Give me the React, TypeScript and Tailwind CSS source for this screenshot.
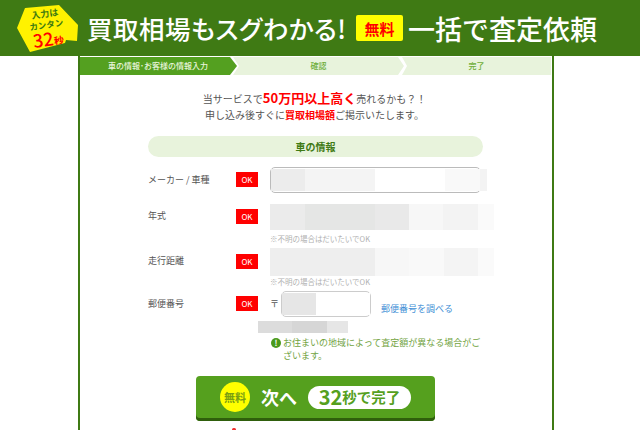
const font = { fontFamily: '"Noto Sans CJK JP", "Liberation Sans", sans-serif' };

function Blocks({ items }: { items: [number, string][] }) {
  return (
    <div className="flex h-full">
      {items.map(([w, c], i) => (
        <div key={i} className="h-full shrink-0" style={{ width: w, backgroundColor: c }} />
      ))}
    </div>
  );
}

function OkBadge() {
  return (
    <div className="-mt-[1px] flex h-[15px] w-[22px] shrink-0 items-center justify-center bg-[#ff0000] text-[8px] leading-none text-white">
      OK
    </div>
  );
}

function Badge() {
  return (
    <div className="ml-[17px] mt-[1px] flex h-[47px] w-[61px] shrink-0 flex-col items-center bg-[#fff200] pt-[5px] text-[#3c7a12] [clip-path:polygon(8px_3px,42px_0,61px_20px,60px_36px,49px_35px,48px_38px,13px_47px,0_23px)]">
      <div className="flex -translate-y-[1px] -rotate-[8deg] flex-col items-center">
        <span className="text-[9px] font-bold leading-[10px]">入力は</span>
        <span className="text-[8.5px] font-bold leading-[10px]">カンタン</span>
        <span className="text-[18px] font-medium leading-[18px] text-[#ff0000]">
          32<span className="text-[10px] font-bold">秒</span>
        </span>
      </div>
    </div>
  );
}

function Steps() {
  return (
    <div className="flex h-[18px] text-[8px] font-medium">
      <div className="flex w-[157px] shrink-0 items-center justify-center pr-[3px] pl-[2px] bg-[#54a020] text-[#e9f5dc] [clip-path:polygon(0_0,150px_0,157px_50%,150px_100%,0_100%)]">
        車の情報･お客様の情報入力
      </div>
      <div className="-ml-[4px] flex w-[171px] shrink-0 items-center justify-center bg-[#e8f3dc] text-[#6fae3a] [clip-path:polygon(0_0,165px_0,171px_50%,165px_100%,0_100%,6px_50%)]">
        確認
      </div>
      <div className="-ml-[2px] flex w-[149px] shrink-0 items-center justify-center bg-[#e8f3dc] text-[#6fae3a] [clip-path:polygon(0_0,100%_0,100%_100%,0_100%,5px_50%)]">
        完了
      </div>
    </div>
  );
}

function Hint() {
  return <p className="pl-[190px] text-[7.5px] leading-[12px] text-[#b0b0b0]">※不明の場合はだいたいでOK</p>;
}

export default function App() {
  return (
    <div className="h-[430px] w-[640px] overflow-hidden bg-white text-[9px] text-[#555]" style={font}>
      <header className="flex h-[56px] items-center bg-[#3f7a14] text-white">
        <Badge />
        <h1 className="ml-[9px] flex items-center text-[25.5px] font-medium leading-none">
          <span className="w-[269px] shrink-0 tracking-[0.5px] [font-feature-settings:'palt']">買取相場もスグわかる!</span>
          <span className="flex h-[26px] w-[47px] shrink-0 items-center justify-center rounded-[2px] bg-[#ffff00] text-[15px] font-bold text-[#ff0000]">
            無料
          </span>
          <span className="ml-[5px] text-[27px]">一括で査定依頼</span>
        </h1>
      </header>

      <main className="ml-[78px] h-[374px] w-[476px] border-x-2 border-[#3f7a14] pt-[1px]">
        <Steps />

        <div className="mt-[15px] pr-[3px] text-center text-[10px] leading-[16px]">
          <p>
            当サービスで<b className="text-[13px] text-[#ff0000]">50万円以上高く</b>売れるかも？！
          </p>
          <p>
            申し込み後すぐに<b className="text-[#ff0000]">買取相場額</b>ご掲示いたします。
          </p>
        </div>

        <div className="mt-[13px] ml-[68px] flex h-[21px] w-[335px] items-center justify-center rounded-full bg-[#e8f3dc] text-[10px] font-bold text-[#3f7a14]">
          車の情報
        </div>

        <div className="mt-[10px] flex h-[26px] items-center pl-[68px]">
          <span className="-mt-[1px] w-[88px] shrink-0">メーカー / 車種</span>
          <OkBadge />
          <div className="ml-[12px] h-[26px] w-[211px] shrink-0 rounded-[5px] border border-[#bbb] py-[1px]">
            <Blocks items={[[34, '#ececec'], [70, '#f4f4f4'], [70, '#ffffff'], [35, '#f9f9f9'], [7, '#f3f3f3']]} />
          </div>
        </div>

        <div className="mt-[11px] flex h-[26px] items-center pl-[68px]">
          <span className="-mt-[2px] w-[88px] shrink-0">年式</span>
          <OkBadge />
          <div className="ml-[12px] h-[26px] w-[224px] shrink-0">
            <Blocks items={[[35, '#ebebeb'], [70, '#e5e6e5'], [34, '#e9e9e9'], [34, '#f7f7f7'], [35, '#f3f3f3'], [16, '#fafafa']]} />
          </div>
        </div>
        <div className="mt-[3px]">
          <Hint />
        </div>

        <div className="mt-[3px] flex h-[28px] items-center pl-[68px]">
          <span className="-mt-[2px] w-[88px] shrink-0">走行距離</span>
          <OkBadge />
          <div className="ml-[12px] h-[28px] w-[224px] shrink-0">
            <Blocks items={[[105, '#eeeeee'], [34, '#f7f7f7'], [35, '#f9f9f9'], [34, '#f4f4f4'], [16, '#fafafa']]} />
          </div>
        </div>
        <Hint />

        <div className="mt-[3px] flex h-[26px] items-center pl-[68px]">
          <span className="-mt-[1px] w-[88px] shrink-0">郵便番号</span>
          <OkBadge />
          <span className="ml-[12px] w-[11px] shrink-0">〒</span>
          <div className="h-[26px] w-[90px] shrink-0 rounded-[5px] border border-[#ccc] py-[1px]">
            <Blocks items={[[34, '#e6e6e6'], [54, '#ffffff']]} />
          </div>
          <a className="ml-[10px] mt-[10px] whitespace-nowrap text-[#3f8fd6]">郵便番号を調べる</a>
        </div>

        <div className="mt-[4px] ml-[178px] h-[12px] w-[90px]">
          <Blocks items={[[34, '#dcdcdc'], [35, '#d6d6d6'], [21, '#e6e6e6']]} />
        </div>

        <div className="mt-[3px] ml-[191px] flex w-[212px] items-start leading-[13px] text-[#72a33f]">
          <span className="mt-[2px] mr-[2px] flex h-[10px] w-[10px] shrink-0 items-center justify-center rounded-full bg-[#4a9a1c] text-[8px] font-bold leading-none text-white">
            !
          </span>
          <p className="w-[198px]">お住まいの地域によって査定額が異なる場合がございます。</p>
        </div>

        <button className="mt-[14px] ml-[116px] flex h-[45px] w-[239px] items-center rounded-[4px] bg-[#55a01e] pb-[3px] pl-[24px] text-white shadow-[inset_0_-3px_0_#2f5f0c]">
          <span className="flex h-[30px] w-[30px] shrink-0 items-center justify-center rounded-full bg-[#ffff00] text-[11px] font-bold text-[#7a9f12]">
            無料
          </span>
          <span className="ml-[11px] text-[18px] font-bold leading-none">次へ</span>
          <span className="ml-[11px] flex h-[23px] w-[103px] shrink-0 items-center justify-center rounded-full bg-white text-[14.5px] font-bold leading-none text-[#55a01e]">
            <span className="text-[20px]">32</span>秒で完了
          </span>
        </button>
        <div className="mt-[7px] ml-[152px] h-[3px] w-[4px] rounded-full bg-[#f03030]" />
      </main>
    </div>
  );
}
